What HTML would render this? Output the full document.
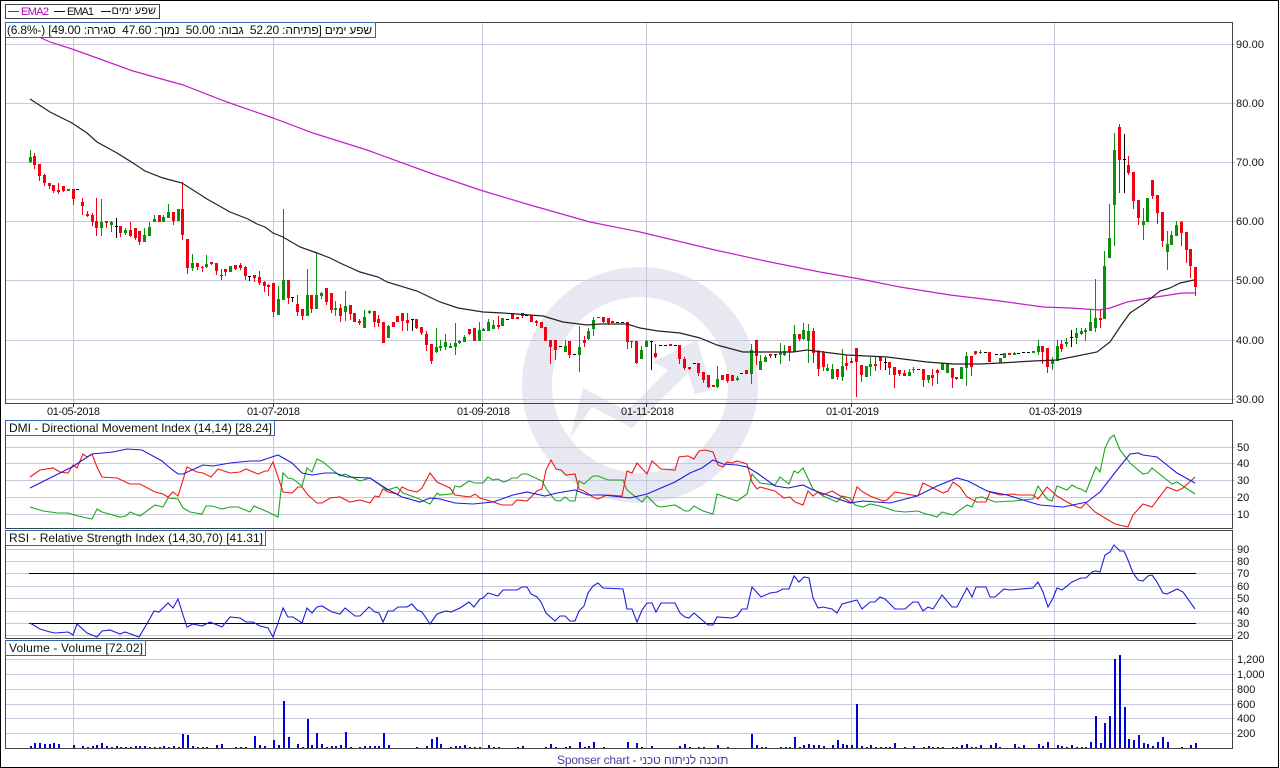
<!DOCTYPE html>
<html lang="he">
<head>
<meta charset="utf-8">
<title>Chart</title>
<style>
html,body{margin:0;padding:0;background:#fff;width:1280px;height:768px;overflow:hidden}
#c{position:relative;width:1280px;height:768px;overflow:hidden;font-family:"Liberation Sans",Arial,sans-serif;color:#111}
svg{position:absolute;left:0;top:0}
text{font-family:"Liberation Sans",Arial,sans-serif;font-size:11px;fill:#111}
.t{font-size:12px}
.b{position:absolute;white-space:pre;font-size:12px;line-height:14px}
</style>
</head>
<body>
<div id="c">
<svg width="1280" height="768" viewBox="0 0 1280 768" xmlns="http://www.w3.org/2000/svg">
<rect width="1280" height="768" fill="#fff"/>
<!-- watermark -->
<circle cx="640" cy="385" r="103" fill="none" stroke="#e8e8f3" stroke-width="30"/>
<polygon fill="#e8e8f3" points="570,438 583,388 627,411 668,370 653,362 697,340 712,390 695,394 688,373 632,428 592,407"/>
<!-- grid -->
<g shape-rendering="crispEdges" stroke="#c8c6dc" stroke-width="1" fill="none">
<path d="M6 44.5H1235M6 103.5H1235M6 162.5H1235M6 221.5H1235M6 280.5H1235M6 340.5H1235M6 399.5H1235"/>
<path d="M6 447.5H1235M6 463.5H1235M6 480.5H1235M6 497.5H1235M6 514.5H1235"/>
<path d="M6 549.5H1235M6 561.5H1235M6 586.5H1235M6 598.5H1235M6 611.5H1235M6 635.5H1235M6 573.5H1235M6 623.5H1235"/>
<path d="M6 659.5H1235M6 674.5H1235M6 689.5H1235M6 704.5H1235M6 718.5H1235M6 733.5H1235"/>
<path d="M73.5 22V403M273.5 22V403M482.5 22V403M646.5 22V403M851.5 22V403M1054.5 22V403"/>
<path d="M73.5 420V748M273.5 420V748M482.5 420V748M646.5 420V748M851.5 420V748M1054.5 420V748"/>
</g>
<!-- panel frames -->
<g shape-rendering="crispEdges" fill="none" stroke="#444" stroke-width="1">
<rect x="5.5" y="22.5" width="1227" height="381"/>
<rect x="5.5" y="420.5" width="1227" height="108"/>
<rect x="5.5" y="530.5" width="1227" height="108"/>
<rect x="5.5" y="640.5" width="1227" height="108"/>
<path d="M73.5 403V407M273.5 403V407M482.5 403V407M646.5 403V407M851.5 403V407M1054.5 403V407" stroke="#333"/>
</g>
<rect x="0.5" y="0.5" width="1278" height="767" fill="none" stroke="#000" shape-rendering="crispEdges"/>

<!-- candles: green -->
<g shape-rendering="crispEdges" fill="none">
<path stroke="#0a900a" stroke-width="1" d="M30.5 150V163M101.5 199V236M111.5 221V232M125.5 228V235M144.5 228V242M149.5 222V236M154.5 215V222M163.5 215V222M168.5 204V218M192.5 254V271M206.5 255V268M278.5 286V315M283.5 209V300M307.5 269V316M316.5 252V309M321.5 292V299M335.5 301V316M345.5 291V321M364.5 310V328M369.5 310V314M388.5 325V338M436.5 328V353M440.5 340V351M445.5 334V350M450.5 343V348M455.5 323V355M459.5 340V344M464.5 335V342M479.5 322V341M483.5 328V331M488.5 319V331M493.5 320V329M565.5 340V352M579.5 326V372M588.5 328V340M593.5 317V336M641.5 346V359M646.5 340V347M717.5 366V388M737.5 376V381M751.5 344V384M760.5 355V370M765.5 355V362M780.5 343V364M784.5 345V356M794.5 325V352M803.5 323V340M808.5 324V363M827.5 364V371M832.5 364V379M842.5 349V381M866.5 366V377M870.5 357V376M909.5 369V376M913.5 367V373M928.5 375V383M942.5 363V370M947.5 363V373M961.5 367V379M966.5 352V386M980.5 350V354M1014.5 352V355M1038.5 340V355M1052.5 357V370M1057.5 340V361M1066.5 338V347M1076.5 328V344M1081.5 328V335M1085.5 328V341M1090.5 309V331M1095.5 279V332M1104.5 251V319M1109.5 204V258M1114.5 133V246M1143.5 208V240M1167.5 231V270M1171.5 231V245M1176.5 221V236"/>
<path stroke="#0a900a" stroke-width="3" d="M30.5 157V162M68.5 189V191M101.5 222V228M111.5 222V225M125.5 230V233M144.5 235V242M149.5 227V236M154.5 219V222M163.5 217V222M168.5 212V218M178.5 209V221M192.5 263V268M206.5 264V267M230.5 266V272M278.5 299V315M283.5 280V300M307.5 295V316M316.5 295V309M321.5 293V296M335.5 308V310M345.5 306V312M364.5 317V328M369.5 311V313M388.5 326V338M436.5 347V352M440.5 346V348M445.5 342V347M450.5 346V348M455.5 343V347M459.5 341V343M464.5 337V342M479.5 330V341M483.5 329V331M488.5 322V331M493.5 325V329M502.5 318V326M565.5 346V352M579.5 347V355M588.5 331V339M593.5 320V329M641.5 350V359M646.5 341V347M717.5 379V387M737.5 378V380M751.5 350V374M760.5 361V370M765.5 357V362M780.5 352V355M784.5 351V355M794.5 334V352M803.5 330V339M808.5 331V341M827.5 368V371M832.5 369V379M842.5 366V377M866.5 366V377M870.5 364V367M909.5 372V376M913.5 369V370M928.5 375V380M942.5 363V370M947.5 364V373M961.5 367V379M966.5 356V368M980.5 352V353M1000.5 358V363M1004.5 353V358M1014.5 353V355M1033.5 351V353M1038.5 346V352M1052.5 360V364M1057.5 346V361M1066.5 342V344M1076.5 333V338M1081.5 331V334M1085.5 330V332M1090.5 322V331M1095.5 318V328M1104.5 266V319M1109.5 238V258M1114.5 150V205M1143.5 221V225M1147.5 198V222M1167.5 244V252M1171.5 235V245M1176.5 225V236"/>
<!-- red -->
<path stroke="#f00010" stroke-width="1" d="M34.5 153V169M39.5 164V181M44.5 174V186M49.5 183V189M53.5 185V193M58.5 183V194M63.5 186V192M73.5 189V205M82.5 198V215M87.5 211V217M92.5 213V226M96.5 198V236M106.5 221V228M120.5 226V237M130.5 222V237M135.5 228V240M139.5 231V245M173.5 212V225M182.5 182V240M187.5 239V274M197.5 263V270M202.5 266V272M211.5 262V265M216.5 263V275M221.5 269V280M225.5 269V276M235.5 265V270M240.5 263V270M245.5 266V280M254.5 275V282M259.5 271V285M264.5 281V292M268.5 284V296M273.5 283V317M288.5 280V304M297.5 295V316M302.5 309V320M311.5 295V313M326.5 288V305M331.5 293V313M340.5 304V322M350.5 305V320M359.5 319V325M374.5 311V327M378.5 315V327M393.5 322V327M402.5 313V331M407.5 313V331M416.5 319V329M421.5 327V335M426.5 331V351M431.5 344V364M469.5 329V335M498.5 316V329M512.5 313V319M522.5 313V318M536.5 320V326M541.5 322V328M550.5 340V364M555.5 340V360M569.5 341V358M584.5 336V347M603.5 317V323M608.5 318V325M627.5 322V349M631.5 341V348M636.5 341V364M655.5 344V358M679.5 345V364M684.5 357V370M689.5 367V370M698.5 363V376M703.5 372V383M708.5 375V388M727.5 374V383M756.5 340V365M770.5 354V358M789.5 346V361M799.5 334V341M813.5 328V363M818.5 350V376M823.5 351V371M837.5 369V380M846.5 355V370M851.5 358V363M856.5 348V397M861.5 365V382M875.5 356V371M880.5 356V370M889.5 362V375M894.5 367V388M899.5 370V376M904.5 370V376M923.5 369V387M932.5 369V386M937.5 369V384M952.5 368V388M956.5 377V380M971.5 356V376M975.5 351V355M1042.5 346V364M1047.5 348V373M1061.5 340V352M1100.5 309V328M1119.5 124V193M1128.5 156V175M1133.5 172V209M1138.5 200V225M1152.5 180V199M1157.5 195V224M1162.5 212V247M1181.5 221V246M1186.5 232V263M1190.5 249V278M1195.5 267V296"/>
<path stroke="#f00010" stroke-width="3" d="M34.5 156V165M39.5 164V176M44.5 175V183M49.5 183V186M53.5 185V191M58.5 190V192M63.5 186V191M73.5 189V199M82.5 202V206M87.5 214V216M92.5 215V222M96.5 221V228M106.5 221V223M120.5 226V233M130.5 230V236M135.5 228V238M139.5 231V242M159.5 215V222M173.5 212V221M182.5 209V235M187.5 239V268M197.5 263V267M202.5 267V268M211.5 262V264M216.5 263V271M221.5 275V276M225.5 269V272M235.5 265V269M240.5 265V268M245.5 267V276M254.5 275V278M259.5 277V283M264.5 282V286M268.5 285V287M273.5 283V312M288.5 280V298M297.5 304V312M302.5 309V316M311.5 295V309M326.5 288V302M331.5 293V310M340.5 308V316M350.5 305V314M354.5 313V322M359.5 321V323M374.5 311V322M378.5 319V323M383.5 322V343M393.5 322V327M397.5 316V322M402.5 313V321M407.5 320V323M416.5 319V328M421.5 327V333M426.5 334V345M431.5 344V361M469.5 329V334M474.5 328V341M498.5 325V327M512.5 313V319M517.5 317V319M522.5 313V316M531.5 315V322M536.5 321V323M541.5 322V328M545.5 327V341M550.5 340V347M555.5 340V350M569.5 341V355M584.5 340V343M598.5 317V318M603.5 317V322M608.5 318V323M612.5 321V323M627.5 322V342M631.5 341V342M636.5 341V363M655.5 353V357M670.5 344V346M679.5 345V359M684.5 359V368M689.5 367V369M698.5 363V373M703.5 372V380M708.5 375V387M713.5 385V387M722.5 375V380M727.5 374V381M732.5 375V381M746.5 370V374M756.5 340V356M770.5 354V356M789.5 346V352M799.5 334V339M813.5 331V353M818.5 351V369M823.5 353V367M837.5 369V377M846.5 363V366M851.5 361V363M856.5 348V362M861.5 365V375M875.5 364V366M880.5 357V361M889.5 362V368M894.5 367V375M899.5 370V374M904.5 373V376M923.5 369V380M932.5 375V378M937.5 370V373M952.5 368V378M956.5 377V379M971.5 356V367M975.5 351V354M989.5 352V362M1009.5 353V355M1042.5 346V352M1047.5 348V367M1061.5 344V349M1100.5 318V320M1119.5 127V160M1128.5 165V173M1133.5 172V201M1138.5 200V218M1152.5 180V196M1157.5 195V213M1162.5 212V241M1181.5 222V233M1186.5 232V250M1190.5 249V266M1195.5 267V287"/>
<!-- black doji -->
<path stroke="#000" stroke-width="1" d="M116.5 218V238M115 226.5h3M249.5 276V281M248 276.5h3M292.5 297V302M291 297.5h3M412.5 319V331M411 319.5h3M651.5 341V370M650 341.5h3M775.5 354V358M774 354.5h3M885.5 358V370M884 362.5h3M1071.5 330V347M1070 337.5h3M1124.5 134V193M1123 159.5h3M76 189.5h3M506 319.5h3M525 315.5h3M559 346.5h3M573 354.5h3M616 322.5h3M621 322.5h3M659 345.5h3M664 345.5h3M674 345.5h3M693 363.5h3M740 373.5h3M917 369.5h3M984 352.5h3M995 354.5h3M1017 353.5h3M1022 352.5h3M1027 352.5h3M1000 354.5h3"/>
</g>

<!-- EMA lines -->
<polyline fill="none" stroke="#c020c8" stroke-width="1.2" points="30,33 50,42 72,49 97,58 133,71 183,85 227,102 273,118 313,133 367,150 430,173 480,190 530,205 590,222 640,232 715,250 770,262 820,272 860,279 900,287 950,295 1000,301 1043,307 1070,308 1100,310 1110,308 1127,302 1150,298 1182,293 1195,293"/>
<polyline fill="none" stroke="#222" stroke-width="1.2" points="30,99 50,112 72,123 87,133 97,142 117,153 133,163 145,171 163,178 182,183 207,199 230,212 248,219 257,224 265,227 273,233 283,237 300,247 317,253 330,258 340,263 360,272 378,277 387,282 417,291 440,302 458,308 483,312 503,313 543,316 563,322 587,325 600,324 627,324 640,328 658,331 680,333 700,338 717,345 743,352 793,352 807,350 847,355 887,357 927,362 953,364 980,364 1000,363 1033,361 1057,360 1097,352 1110,342 1120,327 1130,313 1145,303 1160,291 1170,288 1180,283 1194,280"/>

<!-- DMI -->
<polyline fill="none" stroke="#1ea51e" stroke-width="1.1" points="30,507 43,511 58,513 68,513 78,516 92,519 97,509 102,512 120,517 126,516 130,512 140,516 155,505 163,507 168,498 178,499 183,508 190,512 202,514 206,506 212,506 222,509 230,507 238,507 250,512 254,506 268,512 278,517 283,473 288,478 293,479 302,486 307,468 312,472 317,459 323,462 340,476 345,474 360,481 370,478 387,490 397,487 403,493 417,498 430,504 437,493 440,495 452,494 455,486 460,487 469,481 475,483 483,483 488,477 493,480 498,479 503,482 507,481 512,478 517,478 522,474 527,474 542,481 547,490 555,500 560,501 565,497 570,501 575,501 579,481 584,484 593,476 598,476 608,480 623,480 627,490 642,502 647,496 657,506 661,507 675,505 685,511 689,511 694,506 703,511 713,514 717,494 737,501 747,494 752,474 760,483 775,485 780,477 789,484 794,471 798,473 803,468 813,489 823,496 837,502 842,496 850,498 855,505 863,507 870,504 880,506 895,511 905,512 918,511 923,513 937,517 942,512 953,515 967,505 972,507 976,498 982,497 995,502 1013,501 1033,499 1038,486 1047,499 1052,501 1057,486 1067,490 1072,485 1077,488 1081,489 1086,492 1096,467 1100,472 1105,448 1110,438 1114,435 1120,450 1130,463 1143,474 1148,473 1152,468 1172,484 1177,482 1195,494"/>
<polyline fill="none" stroke="#f01818" stroke-width="1.1" points="30,477 40,470 53,468 60,472 68,473 73,465 77,468 83,454 87,457 92,454 97,467 102,477 117,478 130,484 140,484 155,492 163,494 168,497 173,492 178,496 187,467 197,472 203,473 211,477 218,469 230,473 240,472 246,469 258,474 265,471 268,471 273,462 283,492 292,493 298,487 302,487 308,495 317,503 322,503 330,498 340,497 350,502 360,500 370,503 375,496 379,497 383,489 388,492 398,494 402,487 408,490 417,492 422,488 430,473 437,482 450,488 455,495 470,497 475,494 480,498 490,501 502,505 512,505 517,500 527,501 537,491 542,489 546,470 551,460 556,469 561,470 566,475 575,474 579,489 584,491 593,497 598,499 607,495 622,496 627,471 632,473 637,463 647,474 652,461 661,469 675,470 679,457 688,456 694,459 699,451 705,450 713,452 718,465 723,467 727,462 732,463 737,461 747,464 752,482 757,489 760,487 775,491 784,498 790,497 795,502 803,505 808,491 813,496 818,492 823,495 832,491 842,497 852,503 857,487 863,492 870,496 883,501 887,500 895,492 918,496 923,483 943,493 948,491 953,482 960,487 967,497 977,502 986,502 990,492 1000,495 1013,494 1018,495 1033,495 1038,499 1047,487 1057,496 1067,502 1077,507 1081,508 1086,503 1095,512 1100,515 1115,524 1128,527 1133,515 1143,504 1152,507 1167,487 1177,491 1183,488 1195,477"/>
<polyline fill="none" stroke="#1c1cdc" stroke-width="1.1" points="30,488 50,478 72,467 92,454 113,452 127,449 142,450 162,461 170,468 178,474 183,474 203,465 213,466 230,463 250,461 260,461 278,455 292,463 302,473 312,475 325,473 335,473 347,477 370,478 387,489 402,497 420,502 430,498 440,499 455,503 473,504 493,502 513,495 527,492 545,496 557,493 575,490 588,495 603,495 630,498 647,494 675,482 690,473 702,468 713,460 723,464 737,465 747,467 757,473 775,486 788,488 803,485 813,490 830,496 850,503 863,501 890,503 917,496 937,486 957,478 968,481 987,491 1007,495 1033,503 1040,505 1063,507 1087,502 1100,492 1117,470 1130,454 1138,453 1143,455 1157,457 1177,473 1195,483"/>

<!-- RSI -->
<path shape-rendering="crispEdges" stroke="#000" stroke-width="1" d="M29 573.5H1196M29 623.5H1196"/>
<polyline fill="none" stroke="#1c1cdc" stroke-width="1.1" points="30,623 40,629 50,632 55,633 68,632 73,635 77,624 87,633 97,637 102,631 110,630 120,634 125,632 139,637 148,622 154,611 159,612 168,603 173,608 178,599 183,615 187,627 193,624 202,626 210,622 222,627 230,617 240,618 246,622 253,622 260,626 268,628 273,637 278,623 283,608 288,617 293,617 302,623 307,608 312,613 317,607 322,606 332,612 340,614 345,608 355,616 360,616 369,607 375,612 379,613 383,622 388,611 393,611 398,607 407,607 412,604 417,610 422,612 430,624 437,614 446,611 451,612 460,608 469,602 474,607 480,599 483,598 488,593 498,596 503,590 517,590 522,587 527,587 531,594 537,597 541,602 546,613 555,621 560,616 565,616 570,621 575,621 579,611 584,606 588,593 593,586 598,583 603,588 623,589 627,609 632,609 637,622 642,610 647,603 652,603 656,612 661,603 675,603 680,613 685,617 689,618 694,613 708,625 713,625 717,617 732,618 737,616 742,609 747,609 752,587 761,597 770,593 777,592 783,589 789,589 794,576 799,582 804,577 809,578 813,598 818,608 823,607 832,609 837,613 842,604 857,600 862,609 870,602 875,602 880,597 885,599 895,609 905,609 913,602 918,602 923,611 928,607 933,609 942,595 952,607 957,607 967,588 972,597 976,587 986,587 990,597 995,597 1004,589 1010,590 1033,588 1038,582 1043,592 1048,607 1053,598 1057,588 1062,590 1072,582 1081,578 1086,578 1092,572 1096,571 1100,572 1105,555 1110,552 1114,545 1120,551 1124,551 1128,560 1133,573 1138,580 1143,581 1148,576 1152,575 1157,582 1163,593 1167,594 1177,589 1183,592 1195,609"/>

<!-- Volume -->
<path shape-rendering="crispEdges" fill="none" stroke="#0000d8" stroke-width="2" d="M31 746V748M35 743V748M40 743V748M45 744V748M50 744V748M54 743V748M59 744V748M74 745V748M83 746V748M88 747V748M93 746V748M97 745V748M102 743V748M107 746V748M112 747V748M117 746V748M121 747V748M126 747V748M131 747V748M136 746V748M140 746V748M145 746V748M150 747V748M155 747V748M160 747V748M164 746V748M169 747V748M174 746V748M179 747V748M183 734V748M188 735V748M193 746V748M198 747V748M203 747V748M207 747V748M217 745V748M222 744V748M236 747V748M241 747V748M246 747V748M255 736V748M260 745V748M265 746V748M274 740V748M279 745V748M284 701V748M289 737V748M298 744V748M303 747V748M308 719V748M312 745V748M317 733V748M322 744V748M327 747V748M332 746V748M336 746V748M341 745V748M346 732V748M351 747V748M360 747V748M365 746V748M370 746V748M375 746V748M379 746V748M384 733V748M389 745V748M417 747V748M427 746V748M432 739V748M437 737V748M441 744V748M451 747V748M456 746V748M460 746V748M465 745V748M470 747V748M475 747V748M480 747V748M489 745V748M494 747V748M499 747V748M518 747V748M523 746V748M546 747V748M551 744V748M556 747V748M566 747V748M570 746V748M580 742V748M585 747V748M589 746V748M594 742V748M604 747V748M628 742V748M637 743V748M642 747V748M652 746V748M680 746V748M685 744V748M690 747V748M699 747V748M704 747V748M718 745V748M728 747V748M752 734V748M757 745V748M762 747V748M766 747V748M781 747V748M786 747V748M790 747V748M795 737V748M800 747V748M804 745V748M809 744V748M814 745V748M819 745V748M824 746V748M833 745V748M838 740V748M843 744V748M847 745V748M852 745V748M857 704V748M862 746V748M867 747V748M871 745V748M876 747V748M881 747V748M886 747V748M890 747V748M895 743V748M905 747V748M914 746V748M924 747V748M929 746V748M933 747V748M938 747V748M943 747V748M953 747V748M957 747V748M962 745V748M967 744V748M972 747V748M976 747V748M981 745V748M991 745V748M996 743V748M1000 747V748M1015 744V748M1019 747V748M1024 745V748M1039 744V748M1043 746V748M1048 742V748M1058 745V748M1062 746V748M1067 747V748M1072 745V748M1077 747V748M1082 747V748M1086 747V748M1091 742V748M1096 716V748M1101 743V748M1105 723V748M1110 716V748M1115 659V748M1120 655V748M1125 707V748M1129 739V748M1134 740V748M1139 735V748M1144 743V748M1148 744V748M1153 746V748M1158 742V748M1163 737V748M1168 742V748M1182 747V748M1191 745V748M1196 743V748"/>
<path shape-rendering="crispEdges" stroke="#444" stroke-width="1" d="M6 748.5H1233"/>

<!-- axis labels -->
<g>
<text x="1236" y="48" textLength="28">90.00</text>
<text x="1236" y="107" textLength="28">80.00</text>
<text x="1236" y="166" textLength="28">70.00</text>
<text x="1236" y="225" textLength="28">60.00</text>
<text x="1236" y="284" textLength="28">50.00</text>
<text x="1236" y="344" textLength="28">40.00</text>
<text x="1236" y="403" textLength="28">30.00</text>
<text x="47" y="415" textLength="53">01-05-2018</text>
<text x="247" y="415" textLength="53">01-07-2018</text>
<text x="457" y="415" textLength="53">01-09-2018</text>
<text x="621" y="415" textLength="53">01-11-2018</text>
<text x="826" y="415" textLength="53">01-01-2019</text>
<text x="1029" y="415" textLength="53">01-03-2019</text>
<text x="1237" y="451">50</text>
<text x="1237" y="467">40</text>
<text x="1237" y="484">30</text>
<text x="1237" y="501">20</text>
<text x="1237" y="518">10</text>
<text x="1237" y="553">90</text>
<text x="1237" y="565">80</text>
<text x="1237" y="577">70</text>
<text x="1237" y="590">60</text>
<text x="1237" y="602">50</text>
<text x="1237" y="615">40</text>
<text x="1237" y="627">30</text>
<text x="1237" y="639">20</text>
<text x="1237" y="663">1,200</text>
<text x="1237" y="678">1,000</text>
<text x="1237" y="693">800</text>
<text x="1237" y="708">600</text>
<text x="1237" y="722">400</text>
<text x="1237" y="737">200</text>
</g>

<!-- legend -->
<rect x="5.5" y="4.5" width="154" height="14" fill="#fff" stroke="#444" shape-rendering="crispEdges"/>
<path shape-rendering="crispEdges" stroke="#b000b8" d="M8 11.5H19"/>
<path shape-rendering="crispEdges" stroke="#111" d="M54 11.5H65M101 11.5H111"/>
<text x="21" y="15" textLength="28" style="fill:#b000b8">EMA2</text>
<text x="67" y="15" textLength="27">EMA1</text>

<!-- title boxes -->
<g fill="#fff" stroke="#3366bb" shape-rendering="crispEdges">
<rect x="5.5" y="22.5" width="370" height="15"/>
<rect x="5.5" y="420.5" width="269" height="15"/>
<rect x="5.5" y="530.5" width="260" height="15"/>
<rect x="5.5" y="640.5" width="140" height="15"/>
</g>
<text class="t" x="9" y="432" textLength="263">DMI - Directional Movement Index (14,14) [28.24]</text>
<text class="t" x="9" y="542" textLength="254">RSI - Relative Strength Index (14,30,70) [41.31]</text>
<text class="t" x="9" y="652" textLength="134">Volume - Volume [72.02]</text>
</svg>
<div class="b" style="left:113px;top:4px;width:43px;font-size:11px;direction:rtl;text-align:right">שפע ימים</div>
<div class="b" style="left:6px;top:23px;width:366px;direction:rtl;text-align:right;letter-spacing:-0.17px">שפע ימים [פתיחה: 52.20  גבוה: 50.00  נמוך: 47.60  סגירה: 49.00] (-6.8%)</div>
<div class="b" style="left:557px;top:753px;color:#4a3fa0;direction:ltr;letter-spacing:-0.18px">Sponser chart - תוכנה לניתוח טכני</div>
</div>
</body>
</html>
